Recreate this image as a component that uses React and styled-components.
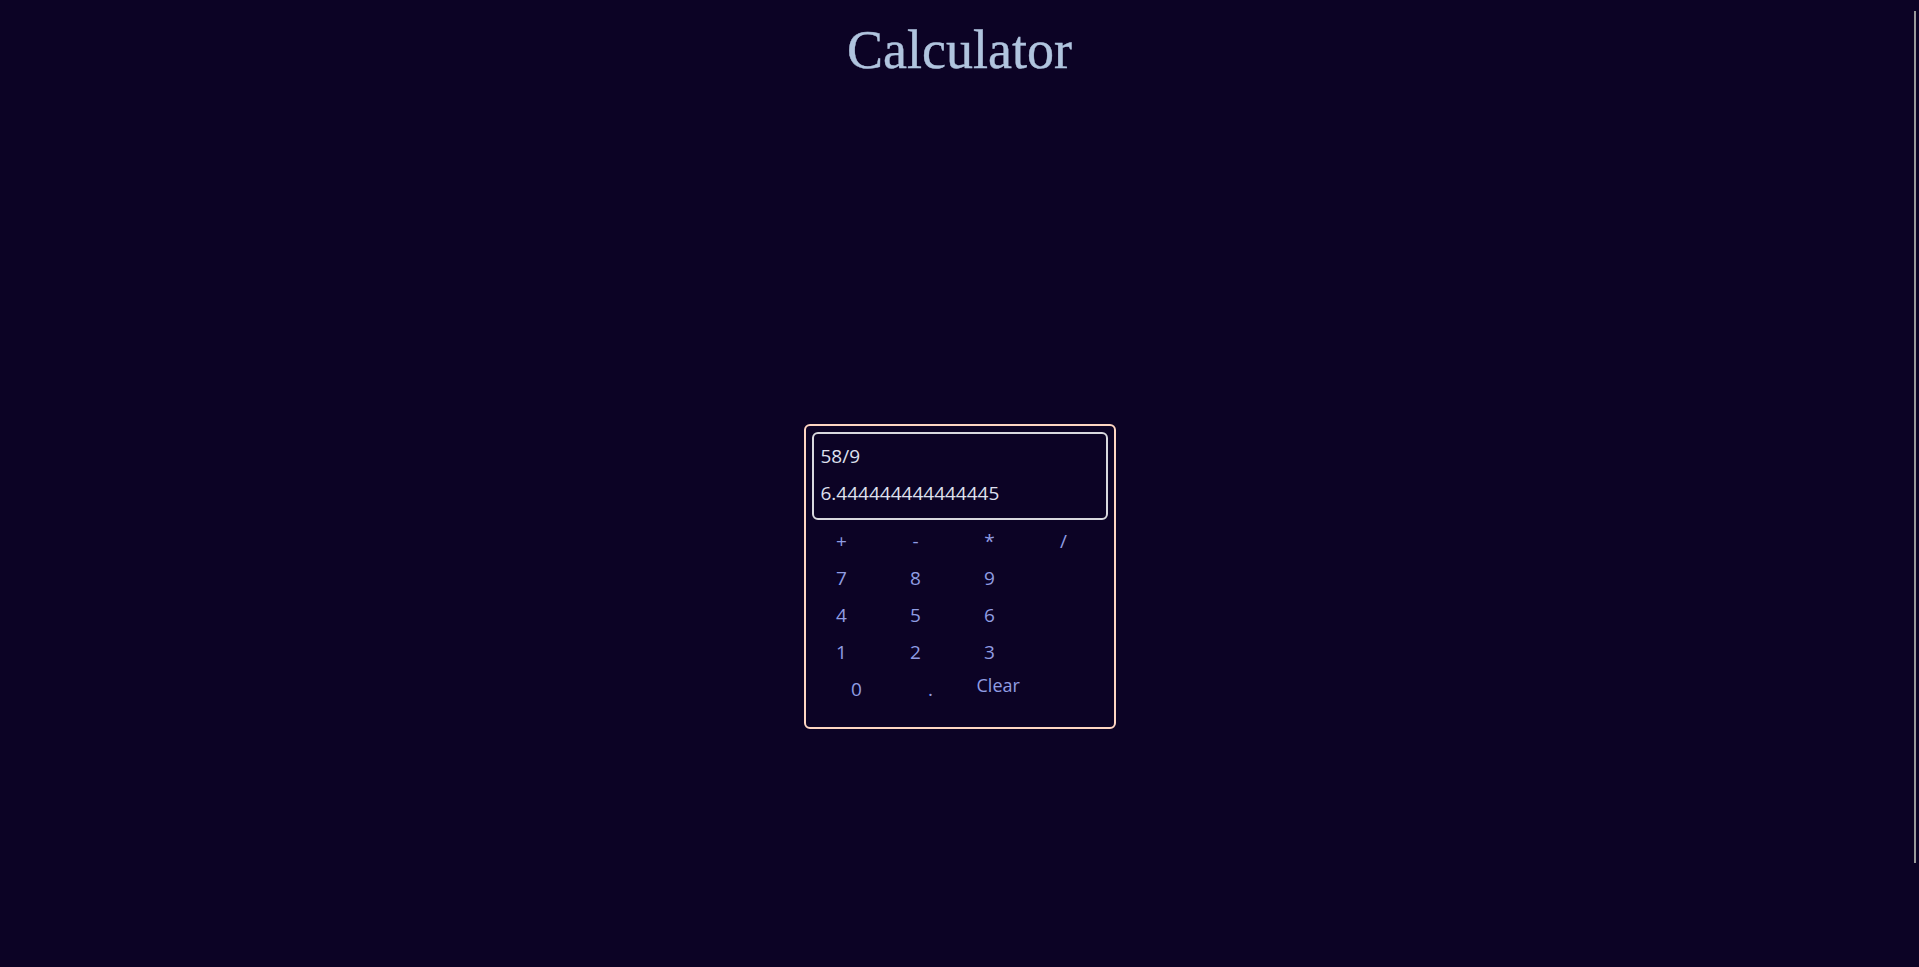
import React, { useState } from "react";
import styled, { createGlobalStyle } from "styled-components";

const GlobalStyle = createGlobalStyle`
	html, body {
		margin: 0;
		padding: 0;
		background: #0c0325;
		overflow: hidden;
	}
	body {
		font-family: "Open Sans", "Noto Sans", sans-serif;
	}
`;

const Page = styled.div`
	min-height: 967px;
	display: flex;
	flex-direction: column;
	align-items: center;
`;

const Title = styled.h1`
	margin: 20px 0 0;
	font-family: "Liberation Serif", "DejaVu Serif", serif;
	font-weight: 400;
	font-size: 54px;
	line-height: 60px;
	color: #b0c4de;
	-webkit-text-stroke: 0.4px #b0c4de;
`;

const Calc = styled.div`
	box-sizing: border-box;
	width: 312px;
	margin-top: 344px;
	padding: 6px;
	border: 2px solid #ffd6c2;
	border-radius: 6px;
`;

const Display = styled.div`
	height: 88px;
	box-sizing: border-box;
	padding: 4px 7px 6px;
	border: 2px solid #d9d9de;
	border-radius: 6px;
	color: #dfe0ee;
	font-size: 19px;
	line-height: 37px;
`;

const Keypad = styled.div`
	margin: 3px 0 13px;
`;

const Row = styled.div`
	display: flex;
	gap: 14px;
	height: 37px;
	padding-left: ${(p) => p.$offset || 0}px;
`;

const Key = styled.button`
	width: ${(p) => (p.$auto ? "auto" : "60px")};
	margin-left: ${(p) => (p.$auto ? "2px" : "0")};
	padding: 0;
	border: none;
	background: transparent;
	color: #909de3;
	font-family: "Open Sans", "Noto Sans", sans-serif;
	font-size: ${(p) => (p.$auto ? "18px" : "19px")};
	line-height: ${(p) => (p.$auto ? "28px" : "37px")};
	height: ${(p) => (p.$auto ? "28px" : "37px")};
	text-align: center;
	cursor: pointer;
`;

const ScrollThumb = styled.div`
	position: fixed;
	top: 11px;
	right: 3px;
	width: 2px;
	height: 852px;
	background: #9a9a9a;
`;

const rows = [
	["+", "-", "*", "/"],
	["7", "8", "9"],
	["4", "5", "6"],
	["1", "2", "3"],
];

function App() {
	const [expr, setExpr] = useState("58/9");
	const [result, setResult] = useState("6.444444444444445");

	const press = (k) => setExpr(expr + k);
	const clear = () => {
		setExpr("");
		setResult("");
	};

	return (
		<>
			<GlobalStyle />
			<Page>
				<Title>Calculator</Title>
				<Calc>
					<Display>
						<div>{expr}</div>
						<div>{result}</div>
					</Display>
					<Keypad>
						{rows.map((r, i) => (
							<Row key={i}>
								{r.map((k) => (
									<Key key={k} onClick={() => press(k)}>
										{k}
									</Key>
								))}
							</Row>
						))}
						<Row $offset={15}>
							<Key onClick={() => press("0")}>0</Key>
							<Key onClick={() => press(".")}>.</Key>
							<Key $auto onClick={clear}>
								Clear
							</Key>
						</Row>
					</Keypad>
				</Calc>
			</Page>
			<ScrollThumb />
		</>
	);
}

export default App;
